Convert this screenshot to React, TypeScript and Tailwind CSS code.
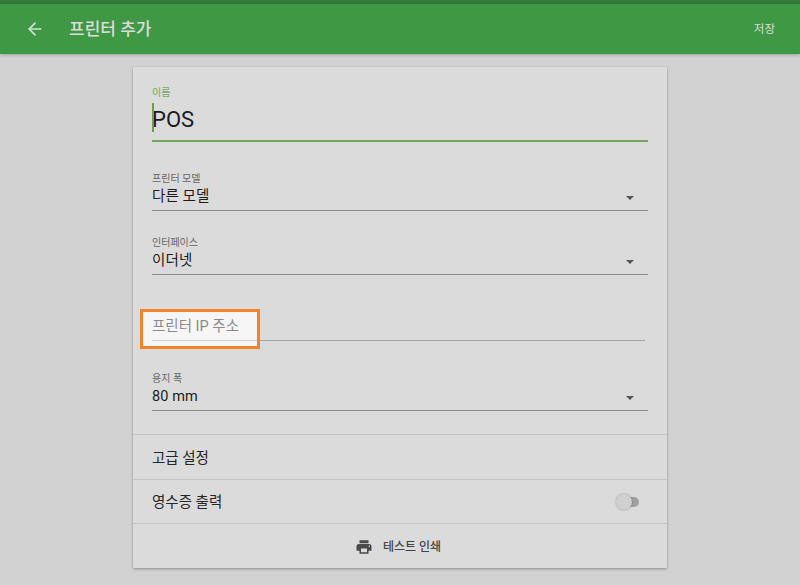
import { ArrowLeft } from "lucide-react";

const font = "font-['Roboto','Noto_Sans_CJK_KR',sans-serif]";

function SelectField({ label, value, className }: { label: string; value: string; className: string }) {
  return (
    <div className={`relative mr-[19px] h-[40px] border-b border-[#8f8f8f] ${className}`}>
      <div className="h-[15px] text-[10px] leading-[15px] text-[#666]">{label}</div>
      <div className="pt-px text-[14.5px] leading-[20px] tracking-[0.1px] text-[#1c1c1c]">{value}</div>
      <div className="absolute right-[14px] top-[25px] h-0 w-0 border-x-[4px] border-t-[4px] border-x-transparent border-t-[#555]" />
    </div>
  );
}

export default function App() {
  return (
    <div className={`h-[585px] w-[800px] overflow-hidden bg-[#d2d2d2] ${font}`}>
      <div className="h-[4px] bg-[#327a36]" />
      <header className="flex h-[50px] items-center bg-[#3f9944] pl-[25px] pr-[25px] text-[#dcdcdc] shadow-[0_1px_3px_rgba(0,0,0,0.25)]">
        <ArrowLeft size={20} strokeWidth={2} />
        <h1 className="ml-[24px] pt-[2px] text-[17px] font-medium">프린터 추가</h1>
        <button className="ml-auto pt-[2px] text-[11.5px]">저장</button>
      </header>

      <main className="mx-auto mt-[13px] h-[501px] w-[534px] rounded-[1px] bg-[#dbdbdb] shadow-[0_1px_3px_rgba(0,0,0,0.35)]">
        <div className="pl-[19px] pt-[20px]">
          <div className="mr-[19px] h-[55px] border-b-2 border-[#79a558]">
            <div className="h-[15px] text-[10px] leading-[11px] text-[#7aa65b]">이름</div>
            <div className="relative pt-px text-[22px] leading-[33px] text-[#1a1a1a]">
              <span className="absolute left-0 top-[1px] h-[29px] w-[1.5px] bg-[#6f9c50]" />
              POS
            </div>
          </div>
          <SelectField label="프린터 모델" value="다른 모델" className="mt-[29px]" />
          <SelectField label="인터페이스" value="이더넷" className="mt-[24px]" />
          <div className="relative mr-[22px] mt-[35px] h-[31px] border-b border-[#a3a3a3] pt-[6px] text-[14.5px] leading-[22px] text-[#8a8a8a]">
            {/* 강조 표시 */}
            <div className="absolute left-[-12px] top-[-1px] h-[40px] w-[120px] border-[3px] border-[#f5832a] bg-[#f6f6f6]">
              <div className="absolute left-[9px] right-0 top-[28px] h-px bg-[#cdcdcd]" />
            </div>
            <span className="relative">프린터 IP 주소</span>
          </div>
          <SelectField label="용지 폭" value="80 mm" className="mt-[30px]" />
        </div>

        <div className="mt-[23px] flex h-[45px] items-center border-t border-[#c6c6c6] px-[19px] pt-[4px] text-[14.5px] text-[#262626]">
          고급 설정
        </div>
        <div className="flex h-[44px] items-center justify-between border-t border-[#c6c6c6] pl-[19px] pr-[28px] text-[14.5px] text-[#262626]">
          <span className="pt-[3px]">영수증 출력</span>
          <div className="relative h-[10px] w-[19px] rounded-full bg-[#a0a0a0]">
            <div className="absolute left-[-4px] top-[-3px] h-[16px] w-[16px] rounded-full bg-[#d0d0d0] shadow-[0_0_2px_rgba(0,0,0,0.35)]" />
          </div>
        </div>
        <button className="flex h-[45px] w-full items-center justify-center gap-[10px] border-t border-[#c6c6c6] pr-[4px] pt-px text-[12px] font-medium text-[#444]">
          <svg width="18" height="18" viewBox="0 0 24 24" fill="#4a4a4a">
            <path d="M19 8H5c-1.66 0-3 1.34-3 3v6h4v4h12v-4h4v-6c0-1.66-1.34-3-3-3zm-3 11H8v-5h8v5zm3-7c-.55 0-1-.45-1-1s.45-1 1-1 1 .45 1 1-.45 1-1 1zm-1-9H6v4h12V3z" />
          </svg>
          테스트 인쇄
        </button>
      </main>
    </div>
  );
}
